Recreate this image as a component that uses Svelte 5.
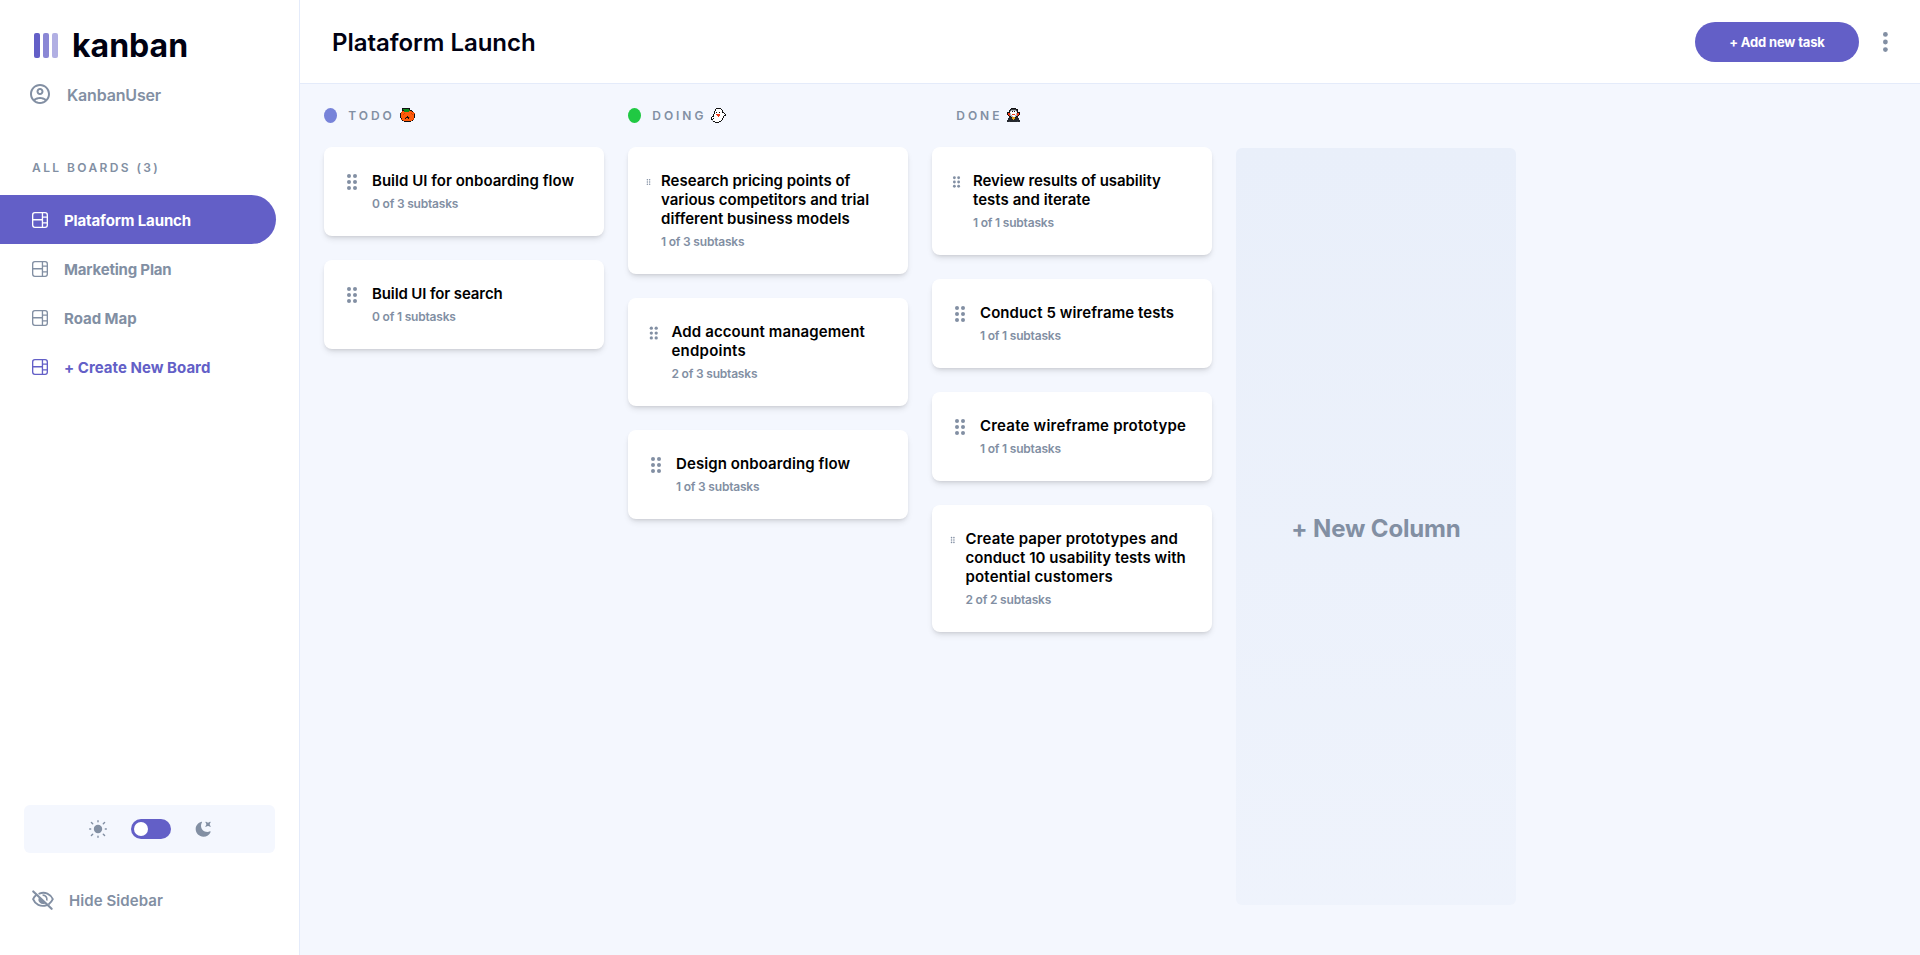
<script>
  const boards = [
    { name: 'Plataform Launch', state: 'active', track: -0.13 },
    { name: 'Marketing Plan', state: '', track: -0.19 },
    { name: 'Road Map', state: '', track: -0.03 },
    { name: '+ Create New Board', state: 'create', track: 0.03 }
  ];

  // Pixel icons, one character per pixel
  const palette = {
    k: '#111111', o: '#ff5a0a', d: '#d94100', g: '#0f8a1c', w: '#ffffff',
    r: '#f03a17', s: '#3a3d42', e: '#aeb2b8', y: '#e3a51c', b: '#24282e'
  };
  const pumpkin = [
    '  kkkkkkkk     ',
    '  kggggggk     ',
    '  kkggggggkk   ',
    '  dogggggoodk  ',
    ' doooooooooood ',
    'kooodoooooodood',
    'koodoooooooodok',
    'koooooooooooook',
    'kooooookooooook',
    'koooodkkkdooook',
    ' koookookooood ',
    ' doooooooooood ',
    '  kdooooooook  ',
    '    kkkkkkk    '
  ];
  const ghost = [
    '     kkkkk     ',
    '    kwwwwwk    ',
    '    kwwwwwwk   ',
    '   kwwwwwwwk   ',
    '   kwkwwkwwkk  ',
    '   kwwwwwwwwwk ',
    '  kwwrrrrwwwwwk',
    '  kwwwrrrwwwwkk',
    ' kkwwwwrwwwwk  ',
    'kwwwwwwwwwwwk  ',
    'kwkwwwwwwwwk   ',
    'kkwwwwwwwwwk   ',
    ' ewwwwwwwwk    ',
    '  kkwwwwkk     ',
    '    kkkk       '
  ];
  const vampire = [
    '    kkkkk    ',
    '   kssssskk  ',
    '  kseeeeesk  ',
    '  kewkwkwek  ',
    'kkkwwwwwwwkkk',
    'krrewwwwwerrk',
    'krrewrrrwerrk',
    ' kreewwweerk ',
    '  kkeewwekk  ',
    '  bbkyyykbb  ',
    ' bbbbyyybbbb ',
    ' bbbbbybbbbb ',
    'bbbbbbbbbbbbb',
    'bbsbbbbbbbsbb'
  ];

  const columns = [
    {
      name: 'TODO', dot: '#7783d9', art: pumpkin, width: 15,
      tasks: [
        { lines: [['Build UI for onboarding flow', 0.024]], sub: '0 of 3 subtasks', grip: 24 },
        { lines: [['Build UI for search', -0.117]], sub: '0 of 1 subtasks', grip: 24 }
      ]
    },
    {
      name: 'DOING', dot: '#20c943', art: ghost, width: 15,
      tasks: [
        { lines: [['Research pricing points of', -0.019], ['various competitors and trial', 0.02], ['different business models', 0.05]], sub: '1 of 3 subtasks', grip: 9 },
        { lines: [['Add account management', 0.12], ['endpoints', 0.228]], sub: '2 of 3 subtasks', grip: 19.5 },
        { lines: [['Design onboarding flow', 0.087]], sub: '1 of 3 subtasks', grip: 24 }
      ]
    },
    {
      name: 'DONE', dot: 'transparent', art: vampire, width: 13,
      tasks: [
        { lines: [['Review results of usability', -0.066], ['tests and iterate', 0.037]], sub: '1 of 1 subtasks', grip: 17 },
        { lines: [['Conduct 5 wireframe tests', 0.085]], sub: '1 of 1 subtasks', grip: 24 },
        { lines: [['Create wireframe prototype', 0.215]], sub: '1 of 1 subtasks', grip: 24 },
        { lines: [['Create paper prototypes and', 0.151], ['conduct 10 usability tests with', 0.03], ['potential customers', 0.17]], sub: '2 of 2 subtasks', grip: 9.5 }
      ]
    }
  ];
</script>

<div class="app">
  <aside class="sidebar">
    <div class="logo">
      <svg width="24" height="25" viewBox="0 0 24 25">
        <rect width="6" height="25" rx="2" fill="#635fc7" />
        <rect x="9" width="6" height="25" rx="2" fill="#635fc7" opacity=".75" />
        <rect x="18" width="6" height="25" rx="2" fill="#635fc7" opacity=".5" />
      </svg>
      <span>kanban</span>
    </div>

    <div class="user">
      <svg width="24" height="24" viewBox="0 0 24 24" fill="currentColor">
        <path fill-rule="evenodd" d="M12 2C6.48 2 2 6.48 2 12s4.48 10 10 10 10-4.48 10-10S17.52 2 12 2zM7.35 18.5C8.66 17.56 10.26 17 12 17s3.34.56 4.65 1.5c-1.31.94-2.91 1.5-4.65 1.5s-3.34-.56-4.65-1.5zm10.79-1.38C16.45 15.8 14.32 15 12 15s-4.45.8-6.14 2.12C4.7 15.73 4 13.95 4 12c0-4.42 3.58-8 8-8s8 3.58 8 8c0 1.95-.7 3.73-1.86 5.12zM12 6c-1.93 0-3.5 1.57-3.5 3.5S10.07 13 12 13s3.5-1.57 3.5-3.5S13.93 6 12 6zm0 5c-.83 0-1.5-.67-1.5-1.5S11.17 8 12 8s1.5.67 1.5 1.5S12.83 11 12 11z" />
      </svg>
      <span>KanbanUser</span>
    </div>

    <h2 class="caption">ALL BOARDS (3)</h2>

    <nav>
      {#each boards as board}
        <button class="board {board.state}">
          <svg width="16" height="16" viewBox="0 0 16 16" fill="currentColor">
            <path d="M0 2.889A2.889 2.889 0 0 1 2.889 0H13.11A2.889 2.889 0 0 1 16 2.889V13.11A2.888 2.888 0 0 1 13.111 16H2.89A2.889 2.889 0 0 1 0 13.111V2.89Zm1.333 5.555v4.667c0 .859.697 1.556 1.556 1.556h6.889V8.444H1.333Zm8.445-1.333V1.333h-6.89A1.556 1.556 0 0 0 1.334 2.89V7.11h8.445Zm4.889-1.333H11.11v4.444h3.556V5.778Zm0 5.778H11.11v3.11h2a1.556 1.556 0 0 0 1.556-1.555v-1.555Zm0-7.112V2.89a1.555 1.555 0 0 0-1.556-1.556h-2v3.111h3.556Z" />
          </svg>
          <span style="letter-spacing:{board.track}px">{board.name}</span>
        </button>
      {/each}
    </nav>

    <div class="theme">
      <svg width="18" height="18" viewBox="0 0 18 18" fill="currentColor">
        <circle cx="9" cy="9" r="4.2" />
        <g stroke="currentColor" stroke-width="1.4" stroke-linecap="round">
          <path d="M9 .7v1M9 16.3v1M.7 9h1M16.3 9h1M2.4 2.4l1.3 1.3M14.3 14.3l1.3 1.3M2.4 15.6l1.3-1.3M14.3 3.7l1.3-1.3" />
        </g>
      </svg>
      <span class="switch"><i></i></span>
      <svg width="16" height="16" viewBox="0 0 16 16" fill="currentColor">
        <path d="M6.474.682c.434-.11.718.406.481.78A6.067 6.067 0 0 0 6.01 4.72c0 3.418 2.827 6.187 6.314 6.187.89.002 1.77-.182 2.584-.54.408-.18.894.165.724.57-1.16 2.775-3.944 4.73-7.194 4.73-4.292 0-7.771-3.41-7.771-7.615 0-3.541 2.466-6.518 5.807-7.37Zm8.433.07c.442-.294.969.232.674.674l-.525.787a1.943 1.943 0 0 0 0 2.157l.525.788c.295.441-.232.968-.674.673l-.787-.525a1.943 1.943 0 0 0-2.157 0l-.786.525c-.442.295-.97-.232-.675-.673l.525-.788a1.943 1.943 0 0 0 0-2.157l-.525-.787c-.295-.442.232-.968.674-.673l.787.525a1.943 1.943 0 0 0 2.157 0l.787-.526Z" />
      </svg>
    </div>

    <button class="hide">
      <svg width="24" height="20" viewBox="0 0 24 20" fill="none" stroke="currentColor" stroke-width="1.9">
        <path d="M8.3 3.6C14 1.3 19.6 4.1 21.8 9.2c-.9 2-2.2 3.6-3.8 4.8M15.4 15.3C9.6 17 4 14.3 2.1 9.2c.7-1.7 1.8-3.1 3.1-4.1" stroke-linecap="round" />
        <path d="M11.6 5.2a4.2 4.2 0 0 1 4.2 5.4" stroke-width="1.7" />
        <path d="M8.2 7.2a4.4 4.4 0 0 0 6.2 6Z" fill="currentColor" stroke="none" />
        <path d="M2.3 1.5 20.6 18.8" stroke-width="2.2" stroke-linecap="round" />
      </svg>
      <span>Hide Sidebar</span>
    </button>
  </aside>

  <div class="page">
    <header>
      <h1>Plataform Launch</h1>
      <button class="add">+ Add new task</button>
      <svg class="more" width="5" height="20" viewBox="0 0 5 20" fill="#828fa3">
        <circle cx="2.4" cy="2.4" r="2.4" /><circle cx="2.4" cy="10" r="2.4" /><circle cx="2.4" cy="17.6" r="2.4" />
      </svg>
    </header>

    <main>
      {#each columns as column}
        <section>
          <h3>
            <i class="dot" style="background:{column.dot}"></i>
            <span>{column.name}</span>
            <svg width={column.width} height="15" viewBox="0 0 {column.width} 15" shape-rendering="crispEdges">
              {#each column.art as row, y}
                {#each row as cell, x}
                  {#if cell !== ' '}<rect {x} {y} width="1" height="1" fill={palette[cell]} />{/if}
                {/each}
              {/each}
            </svg>
          </h3>
          <div class="list">
            {#each column.tasks as task}
              <article>
                <svg width={task.grip} height="24" viewBox="0 0 24 24" fill="#828fa3">
                  {#each [6, 12, 18] as cy}
                    <circle cx="9" {cy} r="2" /><circle cx="15" {cy} r="2" />
                  {/each}
                </svg>
                <div>
                  <h4>
                    {#each task.lines as [text, track]}
                      <span style="letter-spacing:{track}px">{text}</span>
                    {/each}
                  </h4>
                  <p>{task.sub}</p>
                </div>
              </article>
            {/each}
          </div>
        </section>
      {/each}
      <button class="new-column">+ New Column</button>
    </main>
  </div>
</div>

<style>
  :global(body) { margin: 0; overflow: hidden; }
  * { box-sizing: border-box; }
  .app {
    display: flex; width: 100vw; height: 100vh; overflow: hidden;
    font-family: Inter, 'Liberation Sans', sans-serif; color: #000112; background: #f4f7fe;
  }
  button { font: inherit; border: 0; padding: 0; background: none; color: inherit; cursor: pointer; }
  svg { display: block; flex: none; }
  h1, h2, h3, h4, p { margin: 0; }

  .sidebar {
    display: flex; flex-direction: column; flex: none; width: 300px; height: 100%;
    background: #fff; border-right: 1px solid #e4ebfa; color: #828fa3;
  }
  .logo { display: flex; align-items: flex-start; gap: 14px; padding: 33px 0 0 34px; height: 82px; color: #000112; }
  .logo span { font-size: 32px; line-height: 25px; font-weight: 700; letter-spacing: 0; }
  .user { display: flex; align-items: center; gap: 15px; height: 24px; padding-left: 28px; font-size: 16px; font-weight: 600; letter-spacing: -.17px; }
  .user span { line-height: 20px; padding-top: 2px; }
  .caption { margin: 54px 0 19px 32px; font-size: 12px; line-height: 16px; font-weight: 600; letter-spacing: 2.4px; }
  .board {
    display: flex; align-items: center; gap: 16px; width: 276px; height: 49px; padding: 1px 0 0 32px;
    border-radius: 0 24.5px 24.5px 0; font-size: 15px; line-height: 20px; font-weight: 700;
  }
  .board span { padding-top: 1px; }
  .board.active { background: #635fc7; color: #fff; }
  .board.create { color: #635fc7; }
  .theme {
    display: flex; align-items: center; gap: 24px; width: 251px; height: 48px;
    margin: auto 0 0 24px; padding-left: 65px; border-radius: 6px; background: #f4f7fe;
  }
  .switch { display: flex; align-items: center; width: 40px; height: 20px; margin-right: -.5px; padding-left: 3px; border-radius: 10px; background: #635fc7; }
  .switch i { width: 14px; height: 14px; border-radius: 50%; background: #fff; }
  .hide { display: flex; align-items: center; gap: 14px; height: 24px; margin: 35px 0 43px 31px; font-size: 15px; font-weight: 600; letter-spacing: .077px; }
  .hide span { line-height: 20px; padding-top: 1px; }

  .page { display: flex; flex: 1; flex-direction: column; min-width: 0; }
  header { display: flex; align-items: center; height: 84px; padding: 0 32px; background: #fff; border-bottom: 1px solid #e4ebfa; }
  h1 { flex: 1; padding-top: 3px; font-size: 24px; line-height: 30px; font-weight: 600; letter-spacing: -.03px; }
  .add {
    width: 164px; height: 40px; padding-top: 1px; border-radius: 20px; background: #635fc7; color: #fff;
    font-size: 13px; font-weight: 700; letter-spacing: -.17px;
  }
  .more { margin-left: 24px; }

  main { display: flex; flex: 1; gap: 24px; padding: 24px; min-height: 0; }
  section { flex: none; width: 280px; }
  h3 { display: flex; align-items: flex-start; height: 39px; color: #828fa3; font-size: 12px; line-height: 15px; font-weight: 600; letter-spacing: 2.95px; }
  h3 span { margin: 0 4.8px 0 11.3px; }
  .dot { width: 13px; height: 15px; border-radius: 50%; }
  .list { display: flex; flex-direction: column; gap: 24px; }
  article {
    display: flex; gap: 8px; padding: 24px 16px; border-radius: 8px; background: #fff;
    box-shadow: 0 4px 6px -1px rgba(0, 0, 0, .1), 0 2px 4px -2px rgba(0, 0, 0, .15);
  }
  article svg { margin-top: -1px; }
  h4 { color: #000; font-size: 15px; line-height: 19px; font-weight: 600; }
  h4 span { display: block; white-space: nowrap; }
  article p { margin-top: 6px; color: #828fa3; font-size: 12px; line-height: 16px; font-weight: 600; letter-spacing: -.2px; }
  .new-column {
    flex: none; width: 280px; height: 757px; margin-top: 40px; padding-top: 3px; border-radius: 6px;
    background: linear-gradient(180deg, #e9effa 0%, rgba(233, 239, 250, .5) 100%);
    color: #828fa3; font-size: 24px; font-weight: 700; letter-spacing: -.149px;
  }
</style>
